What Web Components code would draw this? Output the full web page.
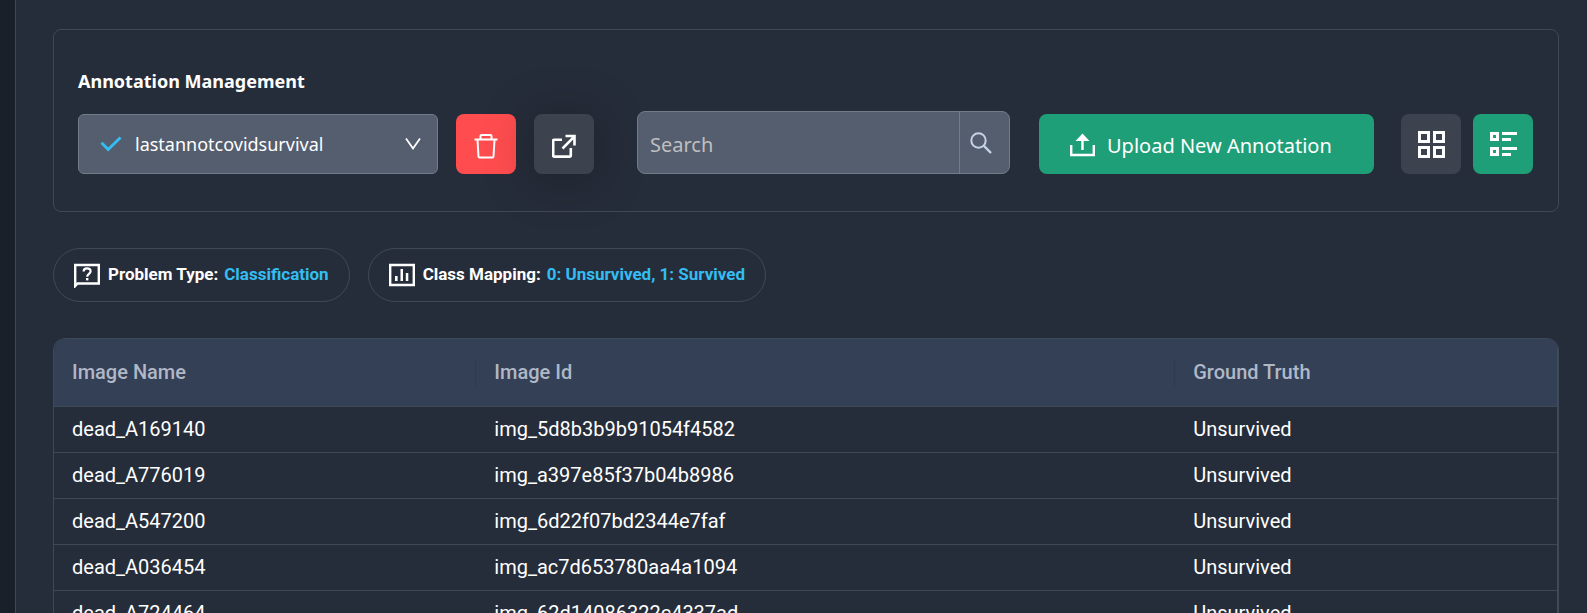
<!DOCTYPE html>
<html lang="en">
<head>
<meta charset="utf-8">
<title>Annotation Management</title>
<style>
  html, body { margin: 0; height: 100%; }
  body {
    --page: #262d3a;
    --line: #3e4957;
    --field: #555e6e;
    --field-line: #717b89;
    --green: #1f9f78;
    --blue: #33bdf2;
    background: var(--page);
    color: #fff;
    font-family: "Noto Sans", sans-serif;
  }
</style>
</head>
<body>
<app-shell>
  <tool-card heading="Annotation Management">
    <annotation-select></annotation-select>
    <icon-button label="Delete annotation" tone="danger">
      <svg width="24" height="26" viewBox="0 0 24 26" fill="none" stroke="#fff" stroke-width="2"><path d="M.5 6.500h23M6.500 6V3q0-1 1-1h9q1 0 1 1v3M3.500 7l1 16.500q.1 1 1 1h13q.9 0 1-1l1-16.500"/></svg>
    </icon-button>
    <icon-button label="Open annotation" tone="raised">
      <svg width="24" height="24" viewBox="0 0 24 24" fill="none" stroke="#fff" stroke-width="2.600"><path d="M10 5.800H2q-.8 0-.8.800v15.200q0 .8.800.800h16q.8 0 .8-.8V14M10.500 14.500 22 2.800M13.500 2h9v9.500"/></svg>
    </icon-button>
    <search-box></search-box>
    <upload-button>Upload New Annotation</upload-button>
    <view-switch></view-switch>
  </tool-card>
  <chip-row>
    <info-chip label="Problem Type:" value="Classification">
      <svg slot="icon" width="26" height="26" viewBox="0 0 26 26"><path fill="none" stroke="#fff" stroke-width="2.400" d="M1.200 24V3h23.600v18.500H3.500z"/><path fill="none" stroke="#fff" stroke-width="2.200" d="M9.600 9.500c0-4.200 7-4.200 7-.3 0 2.600-3.400 2.600-3.400 5.600"/><path fill="#fff" d="M12 16h2.400v2.400h-2.400z"/></svg>
    </info-chip>
    <info-chip label="Class Mapping:" value="0: Unsurvived, 1: Survived">
      <svg slot="icon" width="26" height="26" viewBox="0 0 26 26"><path fill="none" stroke="#fff" stroke-width="2.400" d="M1.200 3h23.600v20H1.200z"/><path fill="#fff" d="M6 14h2.600v5H6zM11.500 7h2.500v12h-2.500zM16.800 11h2.500v8h-2.500z"/></svg>
    </info-chip>
  </chip-row>
  <annotation-table></annotation-table>
</app-shell>

<script>
const define = (name, html, setup) => {
  const template = document.createElement("template");
  template.innerHTML = html;
  customElements.define(name, class extends HTMLElement {
    constructor() {
      super();
      this.attachShadow({ mode: "open" }).append(template.content.cloneNode(true));
    }
    connectedCallback() { if (setup) setup(this.shadowRoot, this); }
  });
};

define("app-shell", `
  <style>
    :host { display: flex; height: 100vh; overflow: hidden; }
    aside { flex: none; width: 15px; background: #1a2029; border-right: 1px solid var(--line); }
    main { flex: 1; min-width: 0; display: flex; flex-direction: column; gap: 36px; padding: 29px 28px 0 37px; }
  </style>
  <aside></aside>
  <main><slot></slot></main>`);

define("tool-card", `
  <style>
    :host { display: block; flex: none; border: 1px solid var(--line); border-radius: 8px; padding: 39px 25px 37px 24px; }
    h2 { margin: 0 0 18px; font: 700 18px/24px "Noto Sans", sans-serif; }
    .bar { display: flex; align-items: flex-end; }
    ::slotted(icon-button) { margin-left: 18px; }
    ::slotted(search-box) { margin: 0 29px 0 43px; }
    ::slotted(view-switch) { margin-left: 27px; }
  </style>
  <h2></h2>
  <div class="bar"><slot></slot></div>`,
  (root, host) => { root.querySelector("h2").textContent = host.getAttribute("heading"); });

define("annotation-select", `
  <style>
    :host { display: block; position: relative; flex: none; width: 360px; height: 60px; }
    select { appearance: none; box-sizing: border-box; width: 100%; height: 100%; margin: 0; padding: 0 48px 0 56px;
      border: 1px solid var(--field-line); border-radius: 6px; background: var(--field); color: #fff;
      font: 400 18px/28px "Noto Sans", sans-serif; }
    svg { position: absolute; pointer-events: none; }
    .check { left: 22px; top: 21px; }
    .chevron { right: 17px; top: 23px; }
  </style>
  <select aria-label="Annotation"><option>lastannotcovidsurvival</option></select>
  <svg class="check" width="22" height="18" viewBox="0 0 22 18"><path fill="none" stroke="#33bdf2" stroke-width="3" d="M1.500 7.800 8.200 14.500 20.500 2.500"/></svg>
  <svg class="chevron" width="16" height="14" viewBox="0 0 16 14"><path fill="none" stroke="#fff" stroke-width="1.800" d="M1 1.500 8 11.500 15 1.500"/></svg>`);

define("icon-button", `
  <style>
    :host { display: block; flex: none; }
    button { display: flex; align-items: center; justify-content: center; width: 60px; height: 60px; margin: 0; padding: 4px 0 0;
      border: 0; border-radius: 8px; background: #3c424e; box-sizing: border-box; }
    :host([tone="danger"]) button { background: #ff4d4f; }
    :host([tone="raised"]) button { box-shadow: 0 4px 52px rgba(0, 0, 0, .3); }
    :host([tone="active"]) button { background: var(--green); }
    :host([tone="active"]) button, :host([tone="plain"]) button { padding: 0; }
  </style>
  <button type="button"><slot></slot></button>`,
  (root, host) => { root.querySelector("button").setAttribute("aria-label", host.getAttribute("label")); });

define("search-box", `
  <style>
    :host { display: flex; flex: 1; min-width: 0; height: 63px; box-sizing: border-box; overflow: hidden;
      border: 1px solid var(--field-line); border-radius: 8px; background: var(--field); }
    input { flex: 1; min-width: 0; padding: 4px 12px 0; border: 0; background: none; color: #fff; outline: 0;
      font: 400 20px/28px "Noto Sans", sans-serif; }
    input::placeholder { color: #bfbfbf; }
    button { display: flex; align-items: center; width: 50px; padding: 0 0 0 9px; border: 0;
      border-left: 1px solid var(--field-line); background: none; box-sizing: border-box; }
  </style>
  <input type="text" placeholder="Search" aria-label="Search">
  <button type="button" aria-label="Run search"><svg width="24" height="24" viewBox="0 0 24 24" fill="none" stroke="#c6d3e6" stroke-width="2"><circle cx="9.500" cy="9.500" r="7.200"/><path stroke-width="2.400" d="m14.700 14.700 7.300 7.300"/></svg></button>`);

define("upload-button", `
  <style>
    :host { display: block; flex: none; }
    button { display: flex; align-items: center; gap: 12px; width: 335px; height: 60px; margin: 0; padding: 3px 0 0 31px; border: 0;
      border-radius: 8px; background: var(--green); color: #fff; box-sizing: border-box;
      font: 400 20px/28px "Noto Sans", sans-serif; white-space: nowrap; }
  </style>
  <button type="button">
    <svg width="25" height="26" viewBox="0 0 25 26"><path fill="none" stroke="#fff" stroke-width="2.400" d="M1.200 12v10h22.600V12M12.500 17V7"/><path fill="#fff" d="M12.500 .5 19.500 8h-14z"/></svg>
    <span><slot></slot></span>
  </button>`);

define("view-switch", `
  <style>:host { display: flex; flex: none; gap: 12px; }</style>
  <icon-button label="Grid view" tone="plain"><svg width="27" height="27" viewBox="0 0 27 27" fill="none" stroke="#fff" stroke-width="3"><path d="M1.500 1.500h9v9h-9zM16.500 1.500h9v9h-9zM1.500 16.500h9v9h-9zM16.500 16.500h9v9h-9z"/></svg></icon-button>
  <icon-button label="List view" tone="active"><svg width="27" height="24" viewBox="0 0 27 24" fill="none" stroke="#fff" stroke-width="3"><path d="M1.500 1.500h6v6h-6zM1.500 16.500h6v6h-6zM12 1.500h15M12 7.500h9M12 16.500h15M12 22.500h9"/></svg></icon-button>`);

define("chip-row", `
  <style>:host { display: flex; flex: none; gap: 18px; }</style>
  <slot></slot>`);

define("info-chip", `
  <style>
    :host { display: flex; align-items: center; box-sizing: border-box; height: 54px; padding: 0 20px;
      border: 1px solid var(--line); border-radius: 27px; font: 700 17px/24px Roboto, sans-serif; white-space: nowrap; }
    span { padding-bottom: 2px; }
    .label { margin: 0 6px 0 8px; }
    .value { color: var(--blue); }
  </style>
  <slot name="icon"></slot><span class="label"></span><span class="value"></span>`,
  (root, host) => {
    root.querySelector(".label").textContent = host.getAttribute("label");
    root.querySelector(".value").textContent = host.getAttribute("value");
  });

const rows = [
  ["dead_A169140", "img_5d8b3b9b91054f4582"],
  ["dead_A776019", "img_a397e85f37b04b8986"],
  ["dead_A547200", "img_6d22f07bd2344e7faf"],
  ["dead_A036454", "img_ac7d653780aa4a1094"],
  ["dead_A724464", "img_62d14086322c4337ad"],
];

define("annotation-table", `
  <style>
    :host { display: block; flex: none; overflow: hidden; border: 1px solid var(--line); border-radius: 12px 12px 0 0; }
    table { width: 100%; border-collapse: separate; border-spacing: 0; table-layout: fixed;
      font: 400 20px/24px Roboto, sans-serif; border-right: 1px solid #404a60; }
    th, td { box-sizing: border-box; padding: 0 18px 2px; text-align: left; border-bottom: 1px solid var(--line); }
    th { height: 68px; background: #344056; color: #b0b8c7; font-weight: 500; }
    th:nth-child(1) { width: 28.1%; }
    th:nth-child(2) { width: 46.5%; }
    th:not(:last-child) { background: linear-gradient(#303c4e, #303c4e) right center / 1px 30px no-repeat #344056; }
    td { height: 46px; }
  </style>
  <table>
    <thead><tr><th scope="col">Image Name</th><th scope="col">Image Id</th><th scope="col">Ground Truth</th></tr></thead>
    <tbody></tbody>
  </table>`,
  root => {
    const body = root.querySelector("tbody");
    for (const row of rows) {
      const tr = body.insertRow();
      for (const text of [...row, "Unsurvived"]) tr.insertCell().textContent = text;
    }
  });
</script>
</body>
</html>
